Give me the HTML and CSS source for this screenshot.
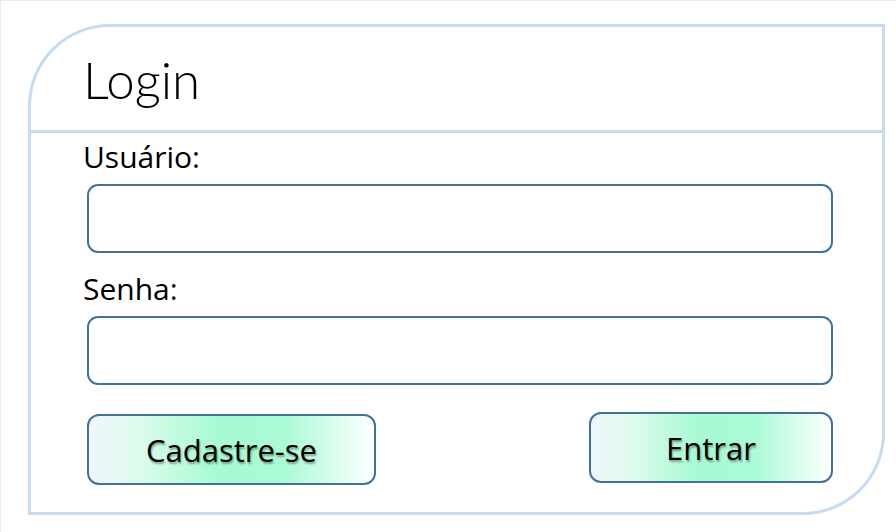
FILE: index.html
```html
<!DOCTYPE html>
<html lang="pt">
<head>
<meta charset="utf-8">
<title>Login</title>
<link rel="stylesheet" href="styles.css">
</head>
<body>
<div class="page">
  <div class="card">
    <div class="card-head">
      <h1 class="title">Login</h1>
    </div>
    <div class="card-body">
      <label class="label">Usuário:</label>
      <div class="input"></div>
      <label class="label label-2">Senha:</label>
      <div class="input"></div>
      <div class="actions">
        <button class="btn btn-reg">Cadastre-se</button>
        <button class="btn btn-enter">Entrar</button>
      </div>
    </div>
  </div>
</div>
</body>
</html>
```

FILE: styles.css
```css
html, body {
  margin: 0;
  padding: 0;
  background: #ffffff;
}
.page {
  width: 896px;
  height: 532px;
  box-sizing: border-box;
  border-top: 1px solid #ebebeb;
  border-left: 1px solid #ebebeb;
  padding: 23px 0 0 27px;
  font-family: "Open Sans", "Noto Sans", sans-serif;
}
.card {
  width: 857px;
  height: 491px;
  box-sizing: border-box;
  border: 3px solid #c6dbef;
  border-radius: 82px 0 82px 0;
  display: flex;
  flex-direction: column;
}
.card-head {
  height: 103px;
  border-bottom: 3px solid #c6dbef;
  padding-left: 52px;
  display: flex;
  align-items: center;
}
.title {
  margin: 0;
  font-family: "Lato", sans-serif;
  font-weight: 300;
  font-size: 51px;
  line-height: 60px;
  color: #000;
  position: relative;
  top: 1px;
}
.card-body {
  padding: 6px 0 0 52px;
  display: flex;
  flex-direction: column;
}
.label {
  font-size: 30px;
  line-height: 36px;
  color: #000;
}
.label-2 {
  margin-top: 18px;
}
.input {
  margin: 9px 0 0 4px;
  width: 746px;
  height: 69px;
  box-sizing: border-box;
  border: 2px solid #41719c;
  border-radius: 11px;
  background: #fff;
}
.actions {
  margin: 27px 0 0 4px;
  width: 746px;
  display: flex;
  justify-content: space-between;
  align-items: flex-start;
}
.btn {
  box-sizing: border-box;
  border: 2px solid #41719c;
  border-radius: 12px;
  background: linear-gradient(90deg, #eff6fb 0%, #dcfbeb 18%, #a7fad4 45%, #a9fad5 68%, #ffffff 100%);
  font-family: "Open Sans", "Noto Sans", sans-serif;
  font-size: 31px;
  line-height: 40px;
  color: #000;
  text-shadow: 1px 2px 2px rgba(0, 0, 0, 0.35);
  padding: 0;
  margin: 0;
}
.btn-reg {
  width: 289px;
  height: 71px;
  margin-top: 2px;
}
.btn-enter {
  width: 244px;
  height: 71px;
  margin-left: auto;
}
```
